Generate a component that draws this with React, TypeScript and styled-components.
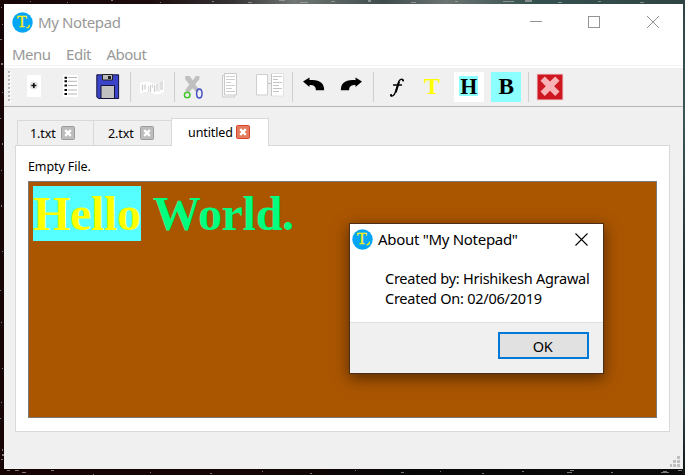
import React from "react";
import styled, { createGlobalStyle } from "styled-components";

const GlobalStyle = createGlobalStyle`
  * { box-sizing: border-box; }
  body { margin: 0; overflow: hidden; }
`;

const ui = `"Noto Sans", "Open Sans", sans-serif`;

const Desktop = styled.div`
  position: relative;
  width: 685px;
  height: 475px;
  padding: 4px 2px 6px 4px;
  background:
    linear-gradient(90deg, #170506 0, #1c0c0d 22%, #363335 34%, #707774 43%, #3f4b4c 56%, #6b7472 65%, #35514f 78%, #304443 100%) top / 100% 4px no-repeat,
    linear-gradient(180deg, #304443, #3c5557 25%, #1f2c2d 60%, #2f4446 85%, #101314) right / 3px 100% no-repeat,
    linear-gradient(90deg, #180303 0, #150505 35%, #070606 60%, #0b0b0b 100%) bottom / 100% 6px no-repeat,
    #170405;
`;

const Speckles = styled.svg`
  position: absolute;
  inset: 0;
`;

const Window = styled.div`
  position: relative;
  display: flex;
  flex-direction: column;
  width: 679px;
  height: 465px;
  background: #f0f0f0;
`;

const TitleBar = styled.header`
  display: flex;
  align-items: center;
  height: 36px;
  padding-left: 8px;
  background: #fff;
`;

const TitleText = styled.span<{ $dark?: boolean }>`
  flex: 1;
  margin-left: 5px;
  font: 15px/20px ${ui};
  letter-spacing: ${(p) => (p.$dark ? "-0.3px" : "-0.38px")};
  color: ${(p) => (p.$dark ? "#000" : "#999")};
  white-space: nowrap;
`;

const MenuBar = styled.nav`
  display: flex;
  gap: 15.5px;
  height: 28px;
  padding: 4px 8px 0;
  border-bottom: 2px solid #fff;
  background: #fff;
  box-shadow: inset 0 -1px #f4f4f4;
`;

const MenuItem = styled.span`
  font: 15px/20px ${ui};
  letter-spacing: -0.5px;
  color: #999;
`;

const ToolBar = styled.div`
  display: flex;
  height: 39px;
  background: #f0f0f0;
  border-bottom: 1px solid #b5b5b5;
  svg { display: block; flex: none; }
`;

const Separator = styled.i<{ $before: number; $after: number }>`
  width: 1px;
  height: 30px;
  margin: 4px ${(p) => p.$after}px 0 ${(p) => p.$before}px;
  background: #cfcfcf;
`;

const Tabs = styled.div`
  display: flex;
  align-items: flex-end;
  height: 38px;
  padding-left: 13px;
`;

const Label = styled.span<{ $width?: number }>`
  width: ${(p) => (p.$width ? p.$width + "px" : "auto")};
  font: 12.5px/16px ${ui};
  letter-spacing: -0.1px;
  color: #000;
  white-space: nowrap;
`;

const Tab = styled.div<{ $active?: boolean; $width: number; $pad: number }>`
  position: relative;
  display: flex;
  align-items: center;
  width: ${(p) => p.$width}px;
  height: ${(p) => (p.$active ? 28 : 25)}px;
  margin-bottom: ${(p) => (p.$active ? -1 : 0)}px;
  padding: 0 0 ${(p) => (p.$active ? 1 : 0)}px ${(p) => p.$pad}px;
  border: 1px solid #d9d9d9;
  border-bottom: 0;
  border-right-width: ${(p) => (p.$active ? 1 : 0)}px;
  background: ${(p) => (p.$active ? "#fff" : "#f0f0f0")};
  z-index: 1;
  svg { margin-left: 5px; }
  ${Label} { padding-top: 2px; }
`;

const Pane = styled.main`
  display: flex;
  flex-direction: column;
  width: 655px;
  height: 287px;
  margin-left: 11px;
  padding: 12px;
  border: 1px solid #d9d9d9;
  background: #fff;
  ${Label} { height: 23px; padding-top: 1px; }
`;

const Editor = styled.div`
  width: 629px;
  height: 237px;
  padding: 4px;
  border: 1px solid #7a7a7a;
  background: #aa5500;
  font: bold 48px/55px "Liberation Serif", serif;
  letter-spacing: -0.3px;
  color: #00ff7f;
  white-space: pre;
`;

const Highlighted = styled.span`
  display: inline-block;
  width: 108px;
  height: 55px;
  margin-right: 1px;
  background: #55ffff;
  color: #ffff00;
`;

const SizeGrip = styled.svg`
  position: absolute;
  right: 3px;
  bottom: 2px;
`;

const Dialog = styled.section`
  position: absolute;
  left: 349px;
  top: 223px;
  width: 255px;
  height: 151px;
  border: 1px solid #4b3017;
  background: #fff;
  box-shadow: 0 4px 14px rgba(0, 0, 0, 0.5);
  z-index: 2;
`;

const DialogTitle = styled.header`
  display: flex;
  align-items: center;
  height: 30px;
  padding: 0 15px 0 2px;
`;

const Message = styled.p`
  height: 68px;
  margin: 0;
  padding: 14px 0 0 35px;
  font: 14.5px/20px ${ui};
  letter-spacing: -0.25px;
  white-space: pre;
  color: #000;
`;

const DialogFooter = styled.footer`
  display: flex;
  justify-content: flex-end;
  height: 51px;
  padding: 9px 14px 0;
  border-top: 1px solid #dfdfdf;
  background: #f0f0f0;
`;

const OkButton = styled.button`
  width: 91px;
  height: 27px;
  padding: 0 2px 0 0;
  border: 2px solid #0078d7;
  background: #e1e1e1;
  font: 14.5px/22px ${ui};
  letter-spacing: -0.3px;
  color: #000;
`;

const Logo = () => (
  <svg width="21" height="21" viewBox="0 0 21 21">
    <circle cx="10.5" cy="10.5" r="10.2" fill="#03a5f5" />
    <text x="9.8" y="15.2" textAnchor="middle" fontFamily="Liberation Serif" fontSize="16" fill="#f5ee1c" stroke="#f5ee1c" strokeWidth=".4">T</text>
    <path d="M14.5 15.8q3 0 3-3" fill="none" stroke="#f5ee1c" strokeWidth="1.3" />
  </svg>
);

const Cross = () => (
  <svg width="13" height="13" viewBox="0 0 13 13">
    <path d="M.5 .5l12 12M12.5 .5l-12 12" stroke="#000" strokeWidth="1.1" />
  </svg>
);

const TabClose = ({ active }: { active?: boolean }) => (
  <svg width="14" height="14" viewBox="0 0 14 14">
    <rect x=".5" y=".5" width="13" height="13" rx="1" fill={active ? "#e27c5c" : "#bdbdbd"} stroke={active ? "#d9452b" : "#9c9c9c"} />
    <path d="M4.2 4.2l5.6 5.6M9.8 4.2l-5.6 5.6" stroke="#fff" strokeWidth="2.4" />
  </svg>
);

const WindowControls = styled.svg`
  margin-right: 24px;
`;

/* Toolbar glyphs share one coordinate system; `x` is the left edge of the button. */
const Tool = ({ x, w = 37, children }: { x: number; w?: number; children: React.ReactNode }) => (
  <svg width={w} height="38" viewBox={`${x} 68 ${w} 38`}>{children}</svg>
);

const Arrow = () => (
  <path d="M303 81.6l6.5-4v2.3c8 0 14.7 1.2 14.7 10.3h-8.3c0-4-2.2-5.3-6.4-5.3v2z" fill="#000" />
);

const letter = { fontFamily: "Liberation Serif", fontWeight: "bold", fontSize: 24, textAnchor: "middle" as const };

const specks = [
  [1, 7, 1, 1], [2, 24, 1, 1], [0, 39, 2, 1], [1, 63, 2, 2], [2, 92, 1, 1], [0, 118, 1, 1], [2, 143, 1, 2], [1, 170, 1, 1],
  [1, 205, 1, 2], [2, 251, 1, 1], [0, 290, 1, 1], [1, 322, 1, 1], [2, 368, 1, 1], [1, 402, 1, 1], [0, 418, 1, 1], [2, 449, 1, 2],
  [2, 454, 2, 2], [1, 459, 2, 1], [7, 470, 3, 1], [15, 470, 4, 1], [22, 472, 4, 1], [51, 470, 3, 1], [93, 474, 1, 1], [150, 472, 1, 1],
  [210, 473, 2, 1], [262, 471, 1, 1], [310, 473, 2, 1], [355, 470, 1, 1], [401, 472, 3, 1], [440, 471, 1, 1], [482, 473, 2, 1],
  [522, 471, 2, 1], [567, 472, 5, 1], [570, 470, 4, 1], [611, 472, 2, 1], [661, 472, 8, 1], [663, 471, 4, 2], [678, 470, 4, 1],
  [30, 1, 1, 1], [67, 2, 1, 1], [111, 0, 2, 1], [160, 2, 1, 1], [212, 1, 2, 1], [248, 2, 4, 1], [279, 0, 6, 1], [300, 2, 8, 1],
  [331, 1, 4, 1], [368, 0, 3, 2], [411, 2, 5, 1], [455, 1, 3, 1], [503, 1, 11, 1], [525, 0, 7, 2], [558, 2, 4, 1], [598, 1, 3, 1], [640, 2, 4, 1],
];

export default function App() {
  return (
    <>
      <GlobalStyle />
      <Desktop>
        <Speckles width="685" height="475" fill="#a9a9a5" opacity=".7">
          {specks.map(([x, y, w, h], i) => <rect key={i} x={x} y={y} width={w} height={h} />)}
        </Speckles>
        <Window>
          <TitleBar>
            <Logo />
            <TitleText>My Notepad</TitleText>
            <WindowControls width="130" height="14" viewBox="0 0 130 14" fill="none" stroke="#949494">
              <path d="M1 6.5h12" />
              <rect x="59.5" y="1.5" width="11" height="11" />
              <path d="M118 1l12 12M130 1l-12 12" />
            </WindowControls>
          </TitleBar>
          <MenuBar>
            <MenuItem>Menu</MenuItem>
            <MenuItem>Edit</MenuItem>
            <MenuItem>About</MenuItem>
          </MenuBar>
          <ToolBar>
            <Tool x={4} w={11}>
              {[0, 1, 2, 3, 4, 5, 6, 7].map((i) => (
                <g key={i}>
                  <rect x="9" y={72 + i * 4} width="2" height="2" fill="#fff" />
                  <rect x="8" y={71 + i * 4} width="2" height="2" fill="#b8b8b8" />
                </g>
              ))}
            </Tool>
            <Tool x={15}>
              <path d="M27 75h14v22H27z" fill="#fff" />
              <circle cx="33.8" cy="85.5" r="3.6" fill="#eee" stroke="#ccc" strokeWidth=".6" />
              <path d="M31.3 85.5h5M33.8 83v5" stroke="#111" strokeWidth="1.7" />
            </Tool>
            <Tool x={52}>
              <path d="M63 75h15v22H63z" fill="#fff" />
              <path d="M68 77.5h9M68 81.3h9M68 85.5h9M68 90h9M68 94h9" stroke="#b5b5b5" />
              <path d="M64.5 77.7h2.5M64.5 81.2h2.5M64.5 85.5h2.5M64.5 89.9h2.5M64.5 94h2.5" stroke="#000" strokeWidth="2" />
            </Tool>
            <Tool x={89}>
              <path d="M96.8 74.8h21.8v23.7H98.3l-1.5-1.5z" fill="#3b43c8" stroke="#14143a" />
              <path d="M102.5 74.5h10v5.5h-10z" fill="#bbb" stroke="#222" />
              <path d="M108 76h3v3h-3z" fill="#222" />
              <path d="M101 85.5h13.5v13H101z" fill="#c1c1c1" stroke="#14143a" />
            </Tool>
            <Separator $before={4} $after={3} />
            <Tool x={134}>
              <path d="M140 83q6-3 12 0t12-3v12q-6 4-12 1t-12 1z" fill="#fff" />
              <path d="M142.5 84.5v6M145 84.5v5M150.5 85v7M154.5 85v7M157 84v7M161 82v8" stroke="#ccc" strokeWidth="1.2" />
              <path d="M148.5 86v6M152.5 84v4M159 83v9M162.5 81v9" stroke="#ddd" />
            </Tool>
            <Separator $before={3} $after={0} />
            <Tool x={175} w={36}>
              <path d="M185.2 76h4.5l3 4.2 3.3-4.2h3.4v3.2l-4.2 5.1 4.3 6-2.9 2.2-4-4.2-3.9 4.2-3.7-1.9 4.4-6.1-4.2-5.3z" fill="#c0c0c0" />
              <circle cx="187.2" cy="95" r="2.8" fill="none" stroke="#43c52a" strokeWidth="1.5" />
              <ellipse cx="199.3" cy="93.6" rx="2.7" ry="4.5" fill="none" stroke="#4652c9" strokeWidth="1.5" />
            </Tool>
            <Tool x={211}>
              <path d="M222.5 75.5h12v21.5h-12z" fill="#f8f8f8" stroke="#c9c9c9" />
              <path d="M224.5 73.5h12V95h-12z" fill="#fff" stroke="#c9c9c9" />
              <path d="M226 76.5h9M226 79.5h9M226 82.5h5M226 85.5h9M226 88.5h6M226 91.5h9" stroke="#cecece" />
            </Tool>
            <Tool x={248} w={41}>
              <path d="M256.5 74.5h11V95h-11z" fill="#fff" stroke="#cfcfcf" />
              <path d="M271.5 73.5h12V96h-12z" fill="#fff" stroke="#e2e2e2" />
              <path d="M271.5 74v22M268 83.5h4M273 76.5h9M273 79.5h5M273 82.5h9M273 85.5h6M273 88.5h9M273 91.5h6" stroke="#c4c4c4" />
            </Tool>
            <Separator $before={3} $after={2} />
            <Tool x={295}><Arrow /></Tool>
            <Tool x={332}><g transform="translate(665 0) scale(-1 1)"><Arrow /></g></Tool>
            <Separator $before={4} $after={4} />
            <Tool x={378} w={36}>
              <path d="M403.3 80.5c-.8-2.2-3.8-1.4-4.8 1.6l-3.2 10.2c-1 3.1-3 4.5-4.6 3.4M393.5 85h8" fill="none" stroke="#000" strokeWidth="1.3" strokeLinecap="round" />
              <path d="M399.2 81.5l-3.5 11" stroke="#000" strokeWidth="1.9" />
              <circle cx="403" cy="80.6" r="1" /><circle cx="391.1" cy="95.2" r="1.1" />
            </Tool>
            <Tool x={414}><text x="432" y="94" {...letter} fill="#ff0">T</text></Tool>
            <Tool x={451}>
              <path d="M454 72h30v30h-30z" fill="#fff" />
              <path d="M459 76h19v20h-19z" fill="#8cffff" />
              <text x="468.7" y="94" {...letter} textLength="17" lengthAdjust="spacingAndGlyphs">H</text>
            </Tool>
            <Tool x={488}>
              <path d="M491 72h30v30h-30z" fill="#8cffff" />
              <text x="506.3" y="94" {...letter} textLength="15.5" lengthAdjust="spacingAndGlyphs">B</text>
            </Tool>
            <Separator $before={3} $after={3} />
            <Tool x={532}>
              <path d="M536.5 73.5h27v27h-27z" fill="#eed9da" />
              <path d="M537.5 74.5h25v25h-25z" fill="#ce1720" />
              <path d="M540.5 80.8l4.3-4.3 5.2 5.1 5.2-5.1 4.3 4.3-5.3 5.5 5.3 5.3-4.3 4.3-5.2-5.1-5.2 5.1-4.3-4.3 5.3-5.3z" fill="#f7b3b6" />
            </Tool>
          </ToolBar>
          <Tabs>
            <Tab $width={76} $pad={12}><Label $width={26}>1.txt</Label><TabClose /></Tab>
            <Tab $width={78} $pad={14}><Label $width={27}>2.txt</Label><TabClose /></Tab>
            <Tab $width={98} $pad={16} $active><Label $width={43}>untitled</Label><TabClose active /></Tab>
          </Tabs>
          <Pane>
            <Label>Empty File.</Label>
            <Editor><Highlighted>Hello</Highlighted> World.</Editor>
          </Pane>
          <SizeGrip width="10" height="11" viewBox="0 0 10 11" fill="#bfbfbf">
            <path d="M7 0h3v3H7zM3 4h3v3H3zM7 4h3v3H7zM0 8h2v3H0zM3 8h3v3H3zM7 8h3v3H7z" />
          </SizeGrip>
        </Window>
        <Dialog>
          <DialogTitle>
            <Logo />
            <TitleText $dark>About "My Notepad"</TitleText>
            <Cross />
          </DialogTitle>
          <Message>{"Created by: Hrishikesh Agrawal\nCreated On: 02/06/2019"}</Message>
          <DialogFooter><OkButton>OK</OkButton></DialogFooter>
        </Dialog>
      </Desktop>
    </>
  );
}
